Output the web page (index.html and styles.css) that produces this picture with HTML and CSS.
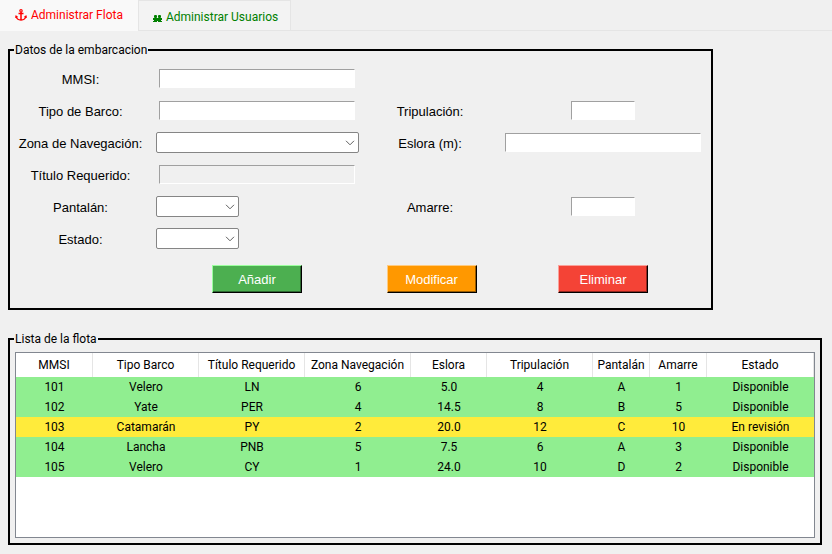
FILE: index.html
```html
<!DOCTYPE html>
<html lang="es">
<head>
<meta charset="utf-8">
<title>Administrar Flota</title>
<link rel="stylesheet" href="styles.css">
</head>
<body>
<nav class="tabs">
  <a href="#flota" class="tab tab-active" aria-current="page">
    <svg class="icon-anchor" viewBox="0 0 12 12" width="12" height="12" aria-hidden="true">
      <g fill="none" stroke="currentColor">
        <circle cx="6" cy="1.8" r="1.2" stroke-width="1.1"/>
        <path d="M6 3v8M3.5 4.5h5" stroke-width="1.5"/>
        <path d="M1.3 7.5C1.6 9.8 3.4 11 6 11s4.400-1.200 4.700-3.500" stroke-width="1.4"/>
      </g>
      <path d="M0 9l.7-3 2.500 2zM12 9l-.7-3-2.500 2z" fill="currentColor"/>
    </svg>
    <span>Administrar Flota</span>
  </a>
  <a href="#usuarios" class="tab">
    <svg class="icon-users" viewBox="0 0 9 7" width="9" height="7" aria-hidden="true">
      <g fill="currentColor">
        <rect x="1" y="0" width="3" height="3" rx="1"/>
        <rect x="5" y="0" width="3" height="3" rx="1"/>
        <path d="M0 3h9v2H8v1h1v1H5V6H4v1H0V6h1V5H0z"/>
      </g>
    </svg>
    <span>Administrar Usuarios</span>
  </a>
</nav>
<main>
  <form id="flota">
    <fieldset class="panel panel-form">
      <legend>Datos de la embarcacion</legend>
      <div class="form-grid">
        <label class="first" for="mmsi">MMSI:</label>
        <input class="entry" id="mmsi" type="text">

        <label class="first" for="tipo">Tipo de Barco:</label>
        <input class="entry" id="tipo" type="text">
        <label for="tripulacion">Tripulación:</label>
        <input class="entry entry-short" id="tripulacion" type="text">

        <label class="first" for="zona">Zona de Navegación:</label>
        <span class="combo">
          <select id="zona"><option></option><option>1</option><option>2</option><option>4</option><option>5</option><option>6</option></select>
          <svg viewBox="0 0 10 6" width="10" height="6" aria-hidden="true"><path d="M1 .8l4 4 4-4"/></svg>
        </span>
        <label for="eslora">Eslora (m):</label>
        <input class="entry" id="eslora" type="text">

        <label class="first" for="titulo">Título Requerido:</label>
        <input class="entry" id="titulo" type="text" disabled>

        <label class="first" for="pantalan">Pantalán:</label>
        <span class="combo combo-short">
          <select id="pantalan"><option></option><option>A</option><option>B</option><option>C</option><option>D</option></select>
          <svg viewBox="0 0 10 6" width="10" height="6" aria-hidden="true"><path d="M1 .8l4 4 4-4"/></svg>
        </span>
        <label for="amarre">Amarre:</label>
        <input class="entry entry-short" id="amarre" type="text">

        <label class="first" for="estado">Estado:</label>
        <span class="combo combo-short">
          <select id="estado"><option></option><option>Disponible</option><option>En revisión</option></select>
          <svg viewBox="0 0 10 6" width="10" height="6" aria-hidden="true"><path d="M1 .8l4 4 4-4"/></svg>
        </span>
      </div>
      <div class="form-actions">
        <button type="button" class="btn btn-add">Añadir</button>
        <button type="button" class="btn btn-edit">Modificar</button>
        <button type="button" class="btn btn-delete">Eliminar</button>
      </div>
    </fieldset>
  </form>

  <fieldset class="panel panel-list">
    <legend>Lista de la flota</legend>
    <div class="tree">
      <table>
        <colgroup>
          <col class="c-id"><col class="c-wide"><col class="c-wide"><col class="c-wide"><col class="c-small"><col class="c-wide"><col class="c-tiny"><col class="c-tiny"><col>
        </colgroup>
        <thead>
          <tr><th>MMSI</th><th>Tipo Barco</th><th>Título Requerido</th><th>Zona Navegación</th><th>Eslora</th><th>Tripulación</th><th>Pantalán</th><th>Amarre</th><th>Estado</th></tr>
        </thead>
        <tbody>
          <tr><td>101</td><td>Velero</td><td>LN</td><td>6</td><td>5.0</td><td>4</td><td>A</td><td>1</td><td>Disponible</td></tr>
          <tr><td>102</td><td>Yate</td><td>PER</td><td>4</td><td>14.5</td><td>8</td><td>B</td><td>5</td><td>Disponible</td></tr>
          <tr class="review"><td>103</td><td>Catamarán</td><td>PY</td><td>2</td><td>20.0</td><td>12</td><td>C</td><td>10</td><td>En revisión</td></tr>
          <tr><td>104</td><td>Lancha</td><td>PNB</td><td>5</td><td>7.5</td><td>6</td><td>A</td><td>3</td><td>Disponible</td></tr>
          <tr><td>105</td><td>Velero</td><td>CY</td><td>1</td><td>24.0</td><td>10</td><td>D</td><td>2</td><td>Disponible</td></tr>
        </tbody>
      </table>
    </div>
  </fieldset>
</main>
</body>
</html>
```
FILE: styles.css
```css
* {
  box-sizing: border-box;
}

body {
  margin: 0;
  min-height: 100vh;
  display: flex;
  flex-direction: column;
  background: #f0f0f0;
  color: #000;
  font: 12px/16px "Segoe UI", Roboto, "Open Sans", sans-serif;
}

/* Tabs */
.tabs {
  display: flex;
  align-items: flex-end;
  height: 31px;
  box-shadow: inset 0 -1px #e5e5e5;
}

.tab {
  display: flex;
  align-items: center;
  gap: 4px;
  height: 31px;
  padding: 3px 12px 0 14px;
  border: 1px solid #e5e5e5;
  border-left: 0;
  background: #f3f3f3;
  color: #008000;
  text-decoration: none;
  white-space: nowrap;
}

.tab-active {
  padding: 0 15px 1px;
  border: 0;
  border-right: 1px solid #e5e5e5;
  background: #f9f9f9;
  color: #f00;
}

.icon-users {
  margin-top: 3px;
}

/* Panels */
main {
  flex: 1;
  display: flex;
  flex-direction: column;
  gap: 21px;
  padding: 11px 10px 9px 8px;
}

.panel {
  min-width: 0;
  margin: 0;
  border: 2px solid #000;
}

.panel legend {
  padding: 0 1px;
}

.panel-form {
  width: fit-content;
  padding: 5px 2px 5px 0;
}

.panel-form legend {
  margin-left: 4px;
}

.panel-list {
  flex: 1;
  display: flex;
  padding: 5px;
}

.panel-list legend {
  margin-left: -1px;
}

/* Form */
.form-grid,
.form-actions {
  display: grid;
  grid-template-columns: 141px 212px 134px 212px;
  align-items: center;
  justify-items: center;
  font: 13px/16px Arial, "Liberation Sans", sans-serif;
}

.form-grid {
  grid-auto-rows: 32px;
}

.form-grid label {
  padding-top: 2px;
}

.form-actions {
  grid-template-columns: 141px 212px 137px 206px;
  height: 48px;
}

.first {
  grid-column: 1;
}

.entry {
  width: 196px;
  height: 19px;
  margin: 0 0 1px;
  padding: 0 2px;
  border: 1px solid #fff;
  border-top-color: #a0a0a0;
  border-left-color: #a0a0a0;
  border-radius: 0;
  background: #fff;
  font: inherit;
}

.entry:disabled {
  background: #f0f0f0;
}

.entry-short {
  width: 64px;
}

.combo {
  position: relative;
  display: flex;
  width: 203px;
  margin-bottom: 1px;
}

.combo-short {
  width: 83px;
  justify-self: start;
  margin-left: 5px;
}

.combo select {
  appearance: none;
  width: 100%;
  height: 21px;
  margin: 0;
  padding: 0 18px 0 3px;
  border: 1px solid #858585;
  border-radius: 2px;
  background: #fff;
  font: inherit;
}

.combo svg {
  position: absolute;
  top: 8px;
  right: 4px;
  fill: none;
  stroke: #606060;
  pointer-events: none;
}

.btn {
  width: 90px;
  height: 28px;
  padding: 1px 0 0;
  border: 1px solid #000;
  border-radius: 0;
  color: #fff;
  font: inherit;
}

.btn-add {
  grid-column: 2;
  border-top-color: #9cff9f;
  border-left-color: #9cff9f;
  background: #4caf50;
  box-shadow: inset -1px -1px #2d6930;
}

.btn-edit {
  border-top-color: #ffcb80;
  border-left-color: #ffcb80;
  background: #ff9800;
  box-shadow: inset -1px -1px #995b00;
}

.btn-delete {
  border-top-color: #faa19a;
  border-left-color: #faa19a;
  background: #f44336;
  box-shadow: inset -1px -1px #922820;
}

/* Fleet table */
.tree {
  flex: 1;
  min-height: 186px;
  border: 1px solid #828790;
  background: #fff;
}

table {
  width: 100%;
  table-layout: fixed;
  border-collapse: separate;
  border-spacing: 0;
  text-align: center;
}

.c-tiny {
  width: 57px;
}

.c-small {
  width: 76px;
}

.c-id {
  width: 77px;
}

.c-wide {
  width: 106px;
}

th {
  height: 24px;
  padding: 0;
  border-right: 1px solid #e5e5e5;
  font-weight: 400;
  white-space: nowrap;
}

td {
  height: 20px;
  padding: 0;
}

tbody tr {
  background: #90ee90;
}

tbody .review {
  background: #ffeb3b;
}
```
